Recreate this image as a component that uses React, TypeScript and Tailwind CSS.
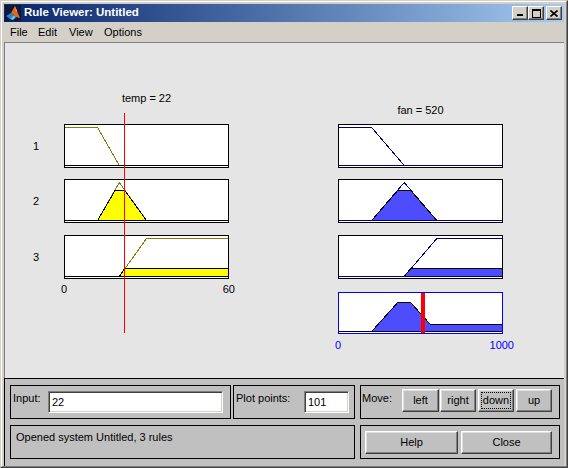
import type { ReactNode } from "react";

// plot geometry: each axes is 163px wide inside its 1px frame, ylim [-0.05 1.05]
const W = 163;
const tx = (d: number) => (d / 60) * W;
const fx = (d: number) => (d / 1000) * W;
const yv = (mu: number, h: number) => Math.round((h * (1.05 - mu)) / 1.1) + 0.5;
const pts = (p: number[][]) => p.map(([x, y]) => `${x.toFixed(1)},${y}`).join(" ");

const OLIVE = "#808000";
const NAVY = "#000080";
const FILL = "#4d4dff";

function Plot({ h = 42, children }: { h?: number; children: ReactNode }) {
  return (
    <svg width={W} height={h} viewBox={`0 0 ${W} ${h}`} className="block" shapeRendering="crispEdges">
      {children}
    </svg>
  );
}

function Box({ children }: { children: ReactNode }) {
  return <div className="w-[165px] h-[44px] border border-black bg-white">{children}</div>;
}

const Y0 = yv(0, 42);
const Y1 = yv(1, 42);
const Y8 = yv(0.8, 42);
const Y2 = yv(0.2, 42);

function TempPlots() {
  return [
    <Plot key="t1">
      <polyline points={pts([[0, Y1], [tx(12), Y1], [tx(20), Y0], [W, Y0]])} fill="none" stroke={OLIVE} />
      <line x1={0} y1={Y0} x2={W} y2={Y0} stroke="#000" />
    </Plot>,
    <Plot key="t2">
      <polyline points={pts([[tx(12), Y0], [tx(20), Y1], [tx(30), Y0]])} fill="none" stroke={OLIVE} />
      <polygon points={pts([[tx(12), Y0], [tx(18.4), Y8], [tx(22), Y8], [tx(30), Y0]])} fill="#ffff00" stroke="#000" />
      <line x1={0} y1={Y0} x2={W} y2={Y0} stroke="#000" />
    </Plot>,
    <Plot key="t3">
      <polyline points={pts([[0, Y0], [tx(20), Y0], [tx(30), Y1], [W, Y1]])} fill="none" stroke={OLIVE} />
      <polygon points={pts([[tx(20), Y0], [tx(22), Y2], [W, Y2], [W, Y0]])} fill="#ffff00" stroke="#000" />
      <line x1={0} y1={Y0} x2={W} y2={Y0} stroke="#000" />
    </Plot>,
  ];
}

function FanPlots() {
  return [
    <Plot key="f1">
      <polyline points={pts([[0, Y1], [fx(200), Y1], [fx(400), Y0], [W, Y0]])} fill="none" stroke={NAVY} />
      <line x1={0} y1={Y0} x2={W} y2={Y0} stroke={NAVY} />
    </Plot>,
    <Plot key="f2">
      <polyline points={pts([[fx(200), Y0], [fx(400), Y1], [fx(600), Y0]])} fill="none" stroke={NAVY} />
      <polygon points={pts([[fx(200), Y0], [fx(360), Y8], [fx(440), Y8], [fx(600), Y0]])} fill={FILL} stroke="#000" />
      <line x1={0} y1={Y0} x2={W} y2={Y0} stroke={NAVY} />
    </Plot>,
    <Plot key="f3">
      <polyline points={pts([[0, Y0], [fx(400), Y0], [fx(600), Y1], [W, Y1]])} fill="none" stroke={NAVY} />
      <polygon points={pts([[fx(400), Y0], [fx(440), Y2], [W, Y2], [W, Y0]])} fill={FILL} stroke="#000" />
      <line x1={0} y1={Y0} x2={W} y2={Y0} stroke={NAVY} />
    </Plot>,
  ];
}

function Aggregate() {
  const h = 40;
  const a0 = yv(0, h);
  const a8 = yv(0.8, h);
  const a2 = yv(0.2, h);
  return (
    <Plot h={h}>
      <polygon
        points={pts([[0, a0], [fx(200), a0], [fx(360), a8], [fx(440), a8], [fx(560), a2], [W, a2], [W, a0]])}
        fill={FILL}
        stroke="#000"
      />
      <line x1={0} y1={a0} x2={W} y2={a0} stroke="#000" />
      <rect x={82} y={0} width={4} height={h} fill="#ff0000" />
    </Plot>
  );
}

function MatlabIcon() {
  return (
    <svg width="16" height="16" viewBox="0 0 16 16">
      <rect width="16" height="16" fill="#0b1a3c" />
      <polygon points="1,11 6,8 9,10 5,14" fill="#2b7fd0" />
      <polygon points="5,14 9,10 11,12 8,15" fill="#5cc8f0" />
      <polygon points="6,8 10,1 12,6 15,13 11,12 9,10" fill="#e8641a" />
      <polygon points="10,1 12,6 11,7" fill="#f8b040" />
    </svg>
  );
}

function CaptionButton({ children, className = "" }: { children: ReactNode; className?: string }) {
  return (
    <div
      className={`w-[16px] h-[14px] flex items-center justify-center bg-[#d4d0c8] border border-t-white border-l-white border-r-[#404040] border-b-[#404040] shadow-[inset_-1px_-1px_#808080] ${className}`}
    >
      {children}
    </div>
  );
}

function Btn({ label, w, focused = false, className = "" }: { label: string; w: string; focused?: boolean; className?: string }) {
  return (
    <div
      className={`${w} h-[23px] p-[2px] bg-[#c0c0c0] border border-t-white border-l-white border-r-[#404040] border-b-[#404040] shadow-[inset_-1px_-1px_#808080,inset_1px_1px_#dfdfdf] ${className}`}
    >
      <div className={`h-full w-full flex items-center justify-center ${focused ? "border border-dotted border-black" : ""}`}>
        {label}
      </div>
    </div>
  );
}

function Field({ value, w }: { value: string; w: string }) {
  return (
    <div
      className={`${w} h-[22px] mt-[5px] flex items-center pl-[3px] bg-white border border-t-[#808080] border-l-[#808080] border-r-white border-b-white shadow-[inset_1px_1px_#404040,inset_-1px_-1px_#d4d0c8]`}
    >
      {value}
    </div>
  );
}

export default function App() {
  const temp = TempPlots();
  const fan = FanPlots();

  return (
    <div className="w-[568px] h-[468px] overflow-hidden border border-t-[#d4d0c8] border-l-[#d4d0c8] border-r-[#404040] border-b-[#404040] bg-[#d4d0c8] font-['Liberation_Sans',Arial,sans-serif] text-[11px] text-black">
      <div className="h-full flex flex-col px-[2px] pt-[2px] border border-t-white border-l-white border-r-[#808080] border-b-[#808080]">
        {/* title bar */}
        <div className="h-[18px] shrink-0 flex items-center pl-[1px] pr-[2px] bg-linear-to-r from-[#0a246a] to-[#a6caf0]">
          <MatlabIcon />
          <span className="ml-[3px] text-[11.5px] font-bold text-white leading-none">Rule Viewer: Untitled</span>
          <div className="ml-auto flex items-center">
            <CaptionButton>
              <svg width="8" height="8" viewBox="0 0 8 8" shapeRendering="crispEdges">
                <rect x="1" y="5" width="6" height="2" fill="#000" />
              </svg>
            </CaptionButton>
            <CaptionButton>
              <svg width="9" height="9" viewBox="0 0 9 9" shapeRendering="crispEdges">
                <rect x="0.5" y="0.5" width="8" height="8" fill="none" stroke="#000" />
                <rect x="0" y="1" width="9" height="1" fill="#000" />
              </svg>
            </CaptionButton>
            <CaptionButton className="ml-[2px]">
              <svg width="8" height="7" viewBox="0 0 8 7">
                <path d="M0.5 0.5 L7.5 6.5 M7.5 0.5 L0.5 6.5" stroke="#000" strokeWidth="1.6" />
              </svg>
            </CaptionButton>
          </div>
        </div>

        {/* menu bar */}
        <div className="h-[20px] shrink-0 flex items-center pl-[6px]">
          <span className="w-[28px]">File</span>
          <span className="w-[31px]">Edit</span>
          <span className="w-[35px]">View</span>
          <span>Options</span>
        </div>

        {/* plot area */}
        <div className="h-[336px] shrink-0 flex items-start bg-[#e5e5e5] border-t border-l border-[#808080] leading-[12px]">
          {/* input variable column */}
          <div className="relative ml-[15px] flex flex-col">
            <div className="ml-[44px] w-[165px] mt-[49px] h-[12px] text-center">temp = 22</div>
            <div className="mt-[20px] flex items-center">
              <span className="w-[44px] pl-[13px]">1</span>
              <Box>{temp[0]}</Box>
            </div>
            <div className="mt-[11px] flex items-center">
              <span className="w-[44px] pl-[13px]">2</span>
              <Box>{temp[1]}</Box>
            </div>
            <div className="mt-[12px] flex items-center">
              <span className="w-[44px] pl-[13px]">3</span>
              <Box>{temp[2]}</Box>
            </div>
            <div className="ml-[44px] w-[165px] mt-[4px] h-[12px] flex justify-between">
              <span className="-ml-[3px]">0</span>
              <span className="-mr-[6px]">60</span>
            </div>
            {/* input value marker */}
            <div className="absolute left-[104px] top-[70px] h-[220px] w-px bg-[#ff0000]" />
          </div>

          {/* output variable column */}
          <div className="ml-[109px] flex flex-col">
            <div className="w-[165px] mt-[61px] h-[12px] text-center">fan = 520</div>
            <div className="mt-[8px]">
              <Box>{fan[0]}</Box>
            </div>
            <div className="mt-[11px]">
              <Box>{fan[1]}</Box>
            </div>
            <div className="mt-[12px]">
              <Box>{fan[2]}</Box>
            </div>
            <div className="mt-[13px] w-[165px] h-[42px] border border-[#0000ff] bg-white">
              <Aggregate />
            </div>
            <div className="w-[165px] mt-[5px] h-[12px] flex justify-between text-[#0000ff]">
              <span className="-ml-[3px]">0</span>
              <span className="-mr-[11px]">1000</span>
            </div>
          </div>
        </div>

        {/* control panel */}
        <div className="h-[88px] shrink-0 flex flex-col gap-[6px] pl-[5px] pt-[6px] bg-[#c0c0c0] border-t border-l border-black">
          <div className="flex h-[34px]">
            <div className="w-[221px] h-full flex items-start border border-black pl-[2px]">
              <span className="w-[35px] pt-[6px] leading-[13px]">Input:</span>
              <Field value="22" w="w-[175px]" />
            </div>
            <div className="ml-[2px] w-[122px] h-full flex items-start border border-black pl-[2px]">
              <span className="w-[68px] pt-[6px] leading-[13px]">Plot points:</span>
              <Field value="101" w="w-[45px]" />
            </div>
            <div className="ml-[5px] w-[200px] h-full flex items-start border border-black pl-[1px]">
              <span className="w-[40px] pt-[6px] leading-[13px]">Move:</span>
              <div className="mt-[3px] flex">
                <Btn label="left" w="w-[37px]" />
                <Btn label="right" w="w-[36px]" className="ml-[1px]" />
                <Btn label="down" w="w-[36px]" className="ml-[2px]" focused />
                <Btn label="up" w="w-[36px]" className="ml-[2px]" />
              </div>
            </div>
          </div>
          <div className="flex h-[34px]">
            <div className="w-[345px] h-full border border-black pl-[5px] pt-[5px] leading-[13px]">
              Opened system Untitled, 3 rules
            </div>
            <div className="ml-[5px] w-[200px] h-full flex items-start border border-black pl-[4px] pt-[5px]">
              <Btn label="Help" w="w-[93px]" />
              <Btn label="Close" w="w-[91px]" className="ml-[3px]" />
            </div>
          </div>
        </div>
      </div>
    </div>
  );
}
